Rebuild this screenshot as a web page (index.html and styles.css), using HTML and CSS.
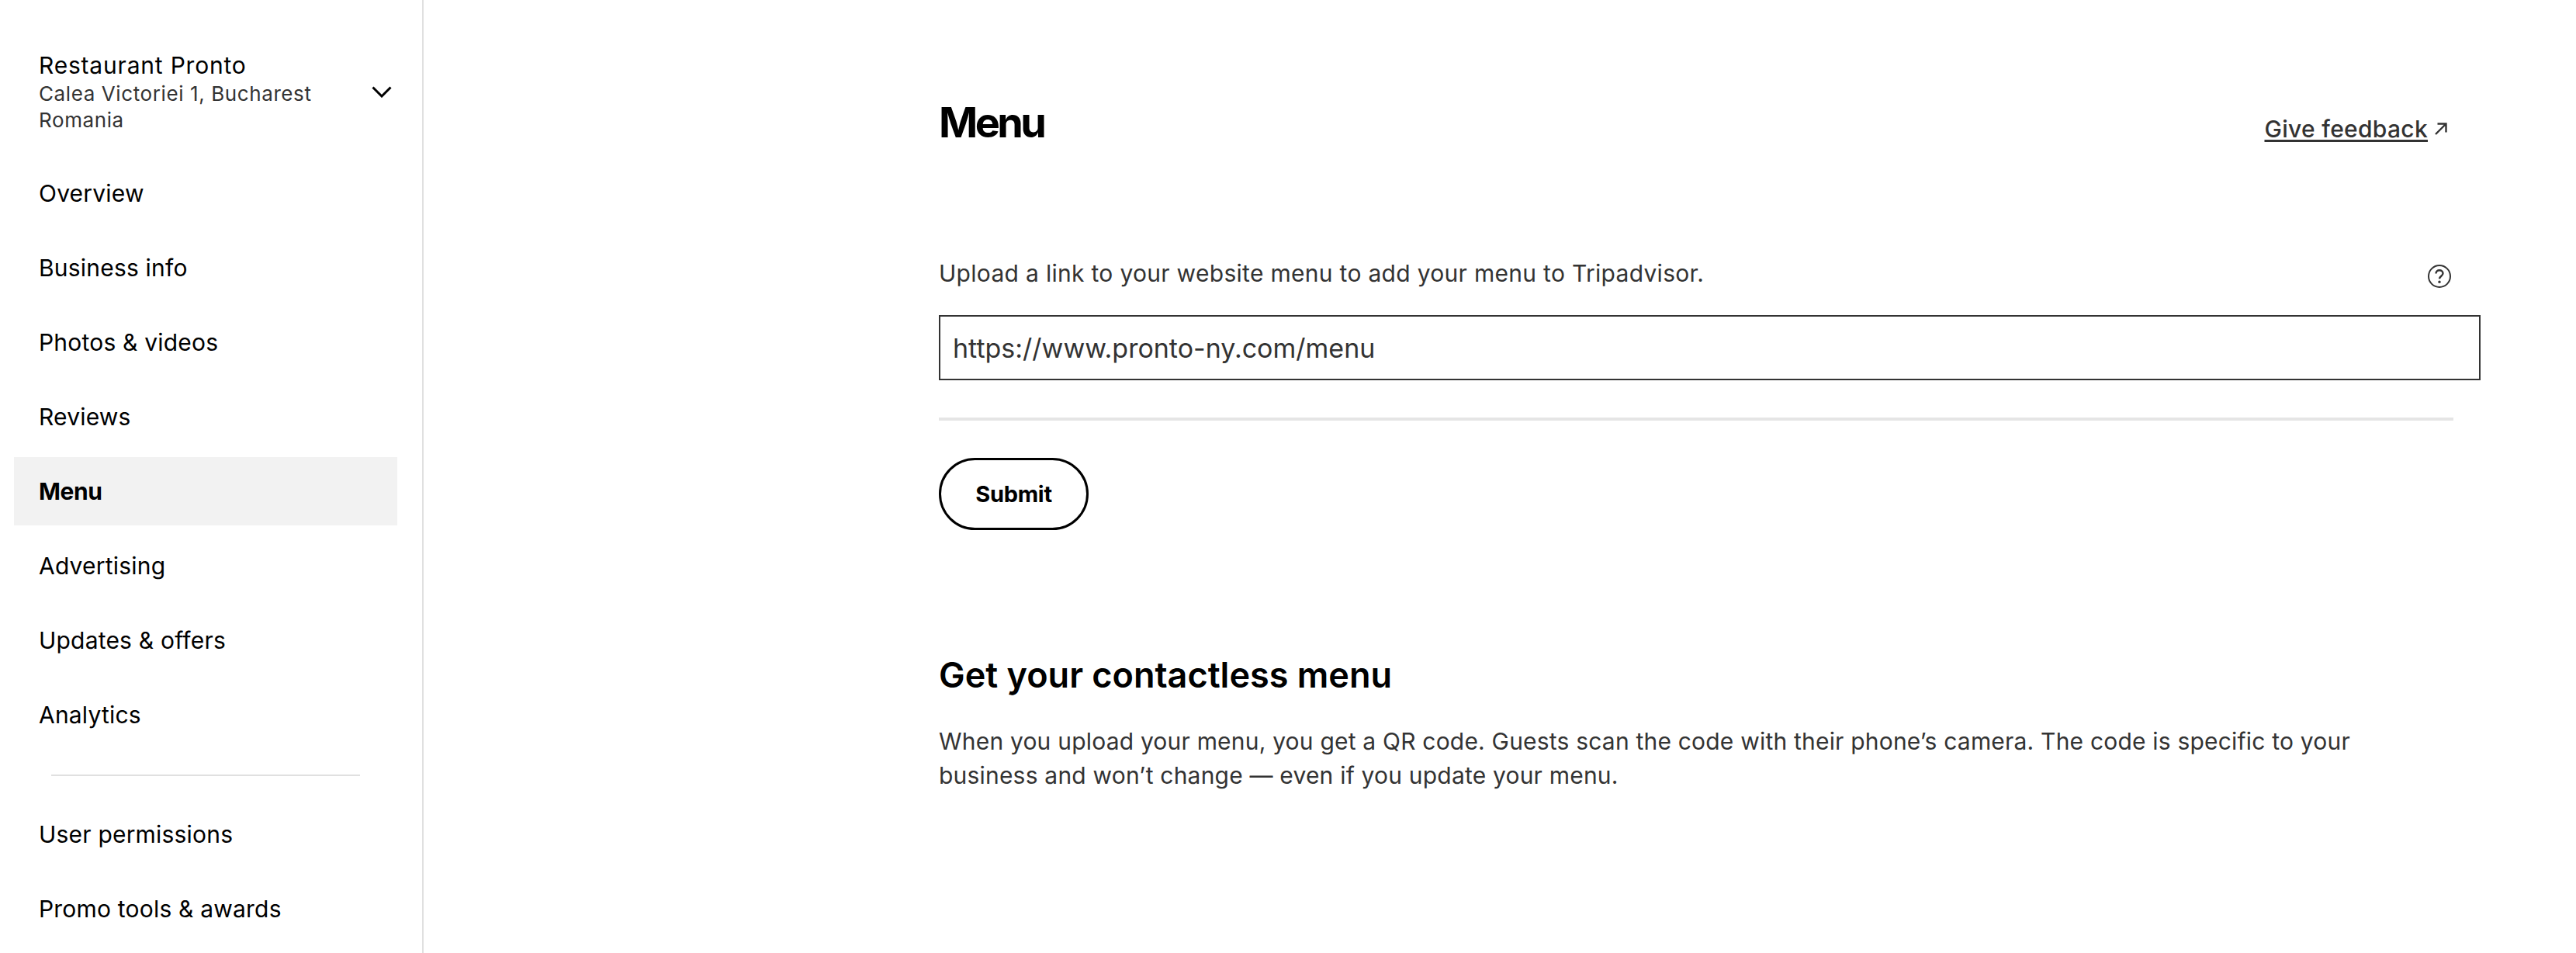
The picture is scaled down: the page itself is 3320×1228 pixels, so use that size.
FILE: index.html
```html
<!DOCTYPE html>
<html lang="en">
<head>
    <meta charset="UTF-8">
    <title>Menu</title>
    <link rel="stylesheet" href="styles.css">
</head>
<body>
    <aside class="sidebar">
        <div class="place">
            <div class="placeText">
                <p class="placeName">Restaurant Pronto</p>
                <p class="placeAddress">Calea Victoriei 1, Bucharest Romania</p>
            </div>
            <svg class="chevron" viewBox="0 0 26 15" width="26" height="15"><path d="M1.5 1.5 13 13 24.5 1.5" fill="none" stroke="#000" stroke-width="3"/></svg>
        </div>
        <nav class="navList">
            <a class="navItem">Overview</a>
            <a class="navItem">Business info</a>
            <a class="navItem">Photos &amp; videos</a>
            <a class="navItem">Reviews</a>
            <a class="navItem active">Menu</a>
            <a class="navItem">Advertising</a>
            <a class="navItem">Updates &amp; offers</a>
            <a class="navItem">Analytics</a>
        </nav>
        <hr class="navLine">
        <nav class="navList">
            <a class="navItem">User permissions</a>
            <a class="navItem">Promo tools &amp; awards</a>
        </nav>
    </aside>
    <main class="content">
        <header class="top">
            <h1 class="title">Menu</h1>
            <a class="feedback"><span class="feedbackText">Give feedback</span>
                <svg viewBox="0 0 18 18" width="18" height="18"><path d="M2 16 15 3M4.5 2.5H15.5V13.5" fill="none" stroke="#333" stroke-width="2.4"/></svg>
            </a>
        </header>
        <div class="uploadRow">
            <p class="bodyText">Upload a link to your website menu to add your menu to Tripadvisor.</p>
            <svg class="help" viewBox="0 0 32 32" width="32" height="32">
                <circle cx="16" cy="16" r="14" fill="none" stroke="#333" stroke-width="2"/>
                <path d="M11.5 12.5c0-2.6 2-4.2 4.5-4.2s4.5 1.6 4.5 4c0 3.4-4.5 3.4-4.5 7" fill="none" stroke="#333" stroke-width="2.4"/>
                <circle cx="16" cy="23.2" r="1.7" fill="#333"/>
            </svg>
        </div>
        <input class="urlInput" type="text" value="https://www.pronto-ny.com/menu">
        <hr class="line">
        <button class="submitBtn">Submit</button>
        <h2 class="subTitle">Get your contactless menu</h2>
        <p class="bodyText para">When you upload your menu, you get a QR code. Guests scan the code with their phone’s camera. The code is specific to your business and won’t change — even if you update your menu.</p>
    </main>
</body>
</html>
```
FILE: styles.css
```css
*{
    margin: 0; padding: 0;
    box-sizing: border-box;
}
html, body{
    height: 100%;
    overflow: hidden;
}
body{
    display: flex;
    font-family: "Inter", "Liberation Sans", sans-serif;
    color: #000;
    background-color: #fff;
}
.sidebar{
    width: 546px;
    height: 1228px;
    flex-shrink: 0;
    padding: 63px 32px 0 18px;
    border-right: 2px solid #e0e0e0;
}
.place{
    display: flex;
    align-items: center;
    justify-content: space-between;
    padding: 0 7px 0 32px;
    height: 110px;
    margin-bottom: 32px;
}
.placeText{
    width: 380px;
}
.placeName{
    font-size: 30px;
    line-height: 40px;
    letter-spacing: 0.8px;
}
.placeAddress{
    font-size: 26px;
    line-height: 34px;
    letter-spacing: 0.6px;
    color: #333;
}
.navList{
    display: flex;
    flex-direction: column;
    gap: 8px;
}
.navItem{
    display: flex;
    align-items: center;
    height: 88px;
    padding-left: 32px;
    font-size: 30px;
    letter-spacing: 0.2px;
}
.active{
    background-color: #f2f2f2;
    font-weight: 700;
    letter-spacing: -0.4px;
}
.navLine{
    border: 0;
    height: 2px;
    background-color: #e0e0e0;
    margin: 33px 48px 31px 48px;
}
.content{
    width: 1952px;
    margin-left: 664px;
    padding-top: 130px;
}
.top{
    display: flex;
    justify-content: space-between;
    align-items: flex-end;
    height: 56px;
}
.title{
    font-size: 54px;
    line-height: 56px;
    font-weight: 700;
    letter-spacing: -3.6px;
}
.feedback{
    display: flex;
    align-items: center;
    gap: 8px;
    padding: 0 7px 2px 0;
    font-size: 30px;
    font-weight: 500;
    letter-spacing: 0.3px;
    color: #333;
}
.feedbackText{
    text-decoration: underline;
    text-underline-offset: 3px;
}
.uploadRow{
    display: flex;
    justify-content: space-between;
    margin-top: 144px;
    padding-right: 2px;
}
.help{
    margin-top: 10px;
}
.bodyText{
    font-size: 30px;
    line-height: 44px;
    letter-spacing: 0.3px;
    color: #333;
}
.urlInput{
    display: block;
    width: 1987px;
    height: 84px;
    margin-top: 32px;
    padding: 0 16px;
    border: 2px solid #333;
    border-radius: 0;
    outline: 0;
    font-family: inherit;
    font-size: 34px;
    color: #333;
}
.line{
    border: 0;
    height: 4px;
    background-color: #e5e5e5;
    margin-top: 48px;
}
.submitBtn{
    display: block;
    width: 193px;
    height: 93px;
    margin-top: 48px;
    border: 3px solid #000;
    border-radius: 47px;
    background-color: #fff;
    font-family: inherit;
    font-size: 29px;
    font-weight: 700;
    letter-spacing: -0.3px;
    color: #000;
}
.subTitle{
    margin-top: 160px;
    font-size: 45px;
    line-height: 54px;
    font-weight: 600;
}
.para{
    max-width: 1880px;
    margin-top: 36px;
    letter-spacing: 0.2px;
}
```
